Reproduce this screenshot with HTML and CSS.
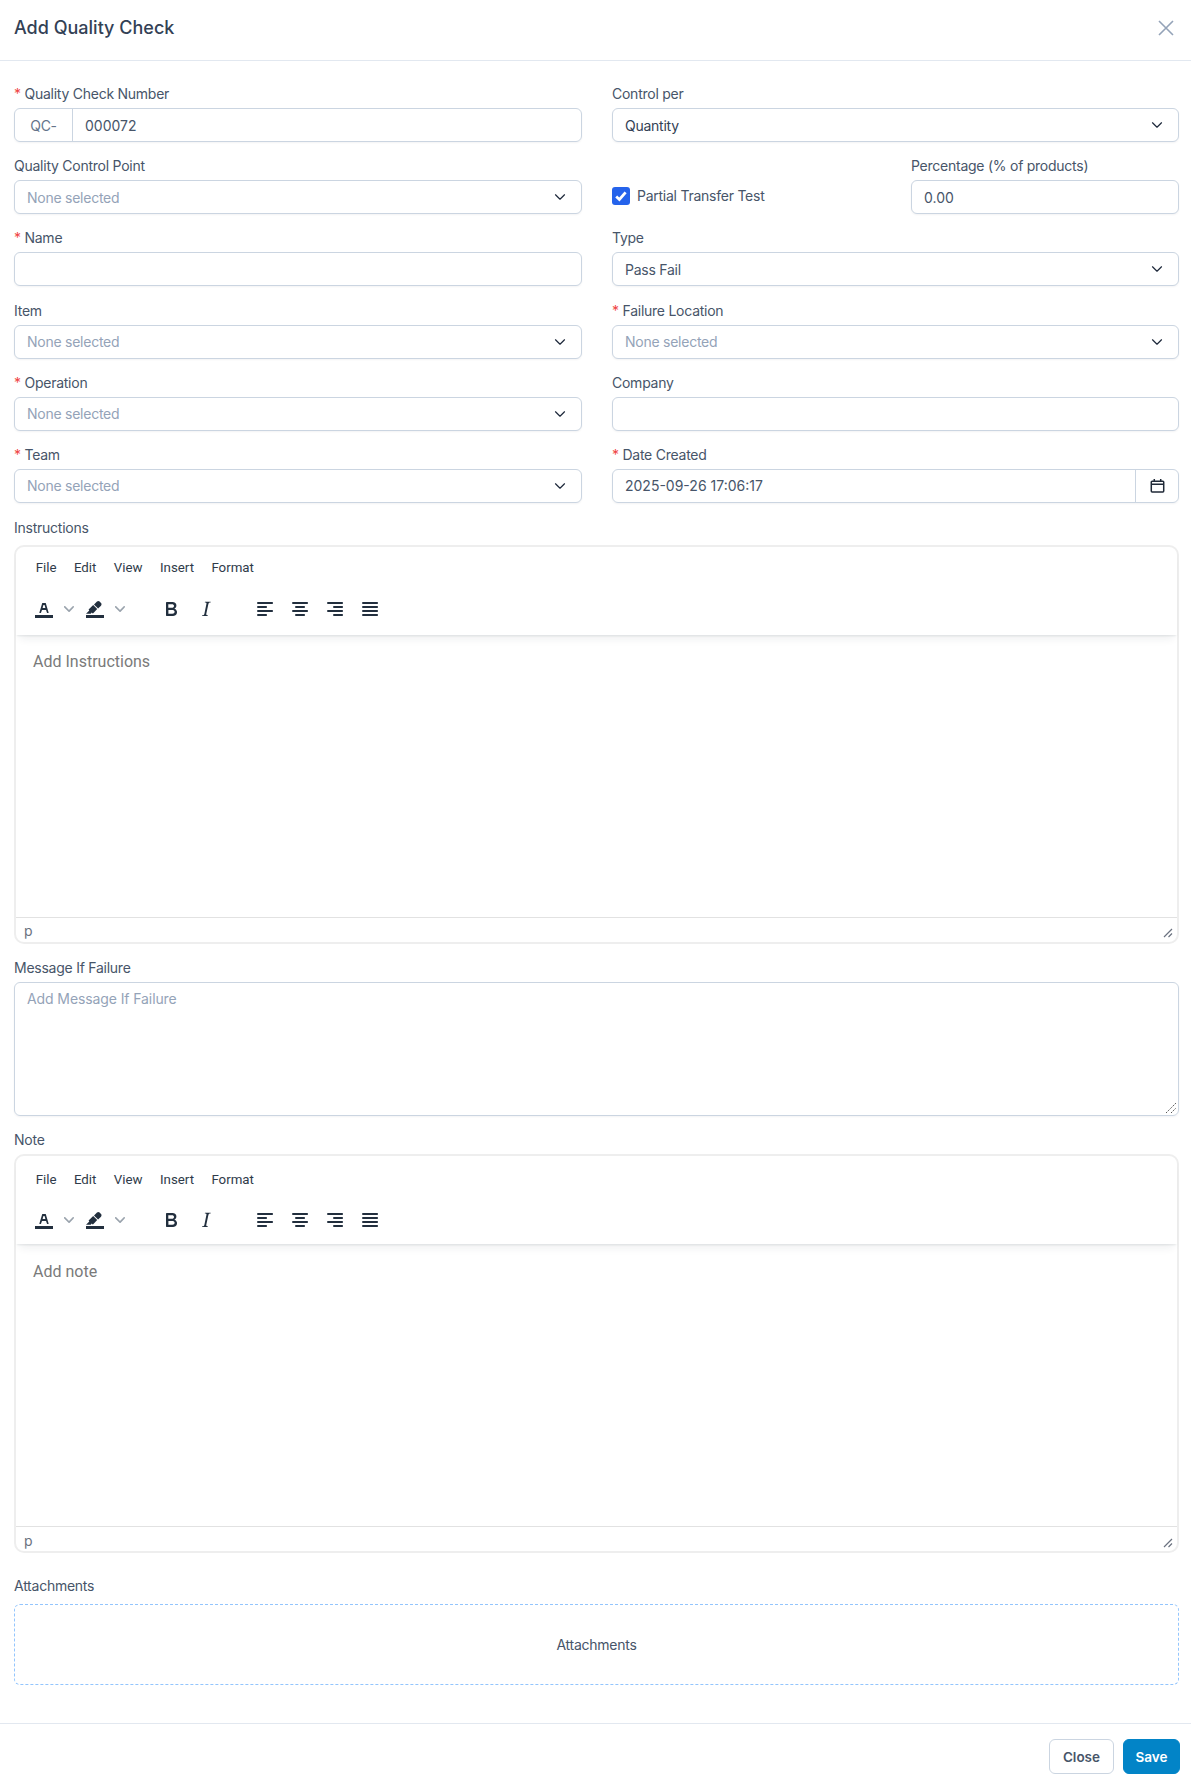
FILE: index.html
```html
<!DOCTYPE html>
<html lang="en">
<head>
    <meta charset="UTF-8">
    <meta name="viewport" content="width=device-width, initial-scale=1.0">
    <title>Add Quality Check</title>
    <link rel="stylesheet" href="styles.css">
</head>
<body>
    <svg class="icon-defs" width="0" height="0">
        <symbol id="i-chevron" viewBox="0 0 20 20"><path fill="none" stroke="currentColor" stroke-width="1.3" stroke-linecap="round" stroke-linejoin="round" d="M5 7.500l5 5 5-5"/></symbol>
        <symbol id="i-caret" viewBox="0 0 10 10"><path d="M8.700 2.200c.3-.3.8-.3 1 0 .4.4.4.9 0 1.200L5.700 7.800c-.3.3-.9.3-1.200 0L.2 3.400a.8.8 0 010-1.200c.3-.3.8-.3 1.100 0L5 6l3.700-3.800z"/></symbol>
        <symbol id="i-text-color" viewBox="0 0 24 24"><path d="M3 18h18v3H3z"/><path d="M8.700 16h-.8a.5.5 0 01-.5-.6l2.700-9c.1-.3.3-.4.5-.4h2.800c.2 0 .4.1.5.4l2.700 9a.5.5 0 01-.5.6h-.8a.5.5 0 01-.4-.4l-.7-2.200c0-.3-.3-.4-.5-.4h-3.400c-.2 0-.4.1-.5.4l-.7 2.200c0 .3-.2.4-.4.4zm2.600-7.600l-.6 2a.5.5 0 00.5.6h1.600a.5.5 0 00.5-.6l-.6-2c0-.3-.3-.4-.5-.4h-.4c-.2 0-.4.1-.5.4z" fill-rule="evenodd"/></symbol>
        <symbol id="i-highlight" viewBox="0 0 24 24"><path d="M3 18h18v3H3z"/><path d="M7.700 16.700H3l3.300-3.300-.7-.8L10.200 8l4 4.100-4 4.200c-.2.2-.6.2-.8 0l-.6-.7-1.100 1.100zm5-7.500L11 7.400l3-2.900a2 2 0 012.600 0L18 6c.7.7.7 2 0 2.700l-2.900 2.900-1.800-1.800-.5-.6"/></symbol>
        <symbol id="i-bold" viewBox="0 0 24 24"><path d="M7.800 19c-.3 0-.5 0-.6-.2l-.2-.5V5.700c0-.2 0-.4.2-.5l.6-.2h5c1.500 0 2.700.3 3.500 1 .7.6 1.100 1.400 1.100 2.500a3 3 0 01-.6 1.900c-.4.6-1 1-1.600 1.200.4.1.9.3 1.300.6s.8.7 1 1.200c.4.4.5 1 .5 1.600 0 1.300-.4 2.300-1.300 3-.8.7-2.100 1-3.800 1H7.800zm5-8.300c.6 0 1.200-.1 1.600-.5.4-.3.6-.7.6-1.300 0-1.100-.8-1.700-2.300-1.700H9.300v3.500h3.400zm.5 6c.7 0 1.300-.1 1.700-.4.4-.4.6-.9.6-1.500s-.2-1-.7-1.400c-.4-.3-1-.4-2-.4H9.400v3.800h4z"/></symbol>
        <symbol id="i-italic" viewBox="0 0 24 24"><path d="M16.700 4.700l-.1.9h-.3c-.6 0-1 0-1.400.3-.3.3-.4.6-.5 1.100l-2.100 9.800v.6c0 .5.4.8 1.400.8h.2l-.2.8H8l.2-.8h.2c1.100 0 1.800-.5 2-1.500l2-9.800.1-.5c0-.6-.4-.8-1.400-.8h-.3l.2-.9h5.800z"/></symbol>
        <symbol id="i-align-left" viewBox="0 0 24 24"><path d="M5 5h14c.6 0 1 .4 1 1s-.4 1-1 1H5a1 1 0 110-2zm0 4h8c.6 0 1 .4 1 1s-.4 1-1 1H5a1 1 0 110-2zm0 8h8c.6 0 1 .4 1 1s-.4 1-1 1H5a1 1 0 010-2zm0-4h14c.6 0 1 .4 1 1s-.4 1-1 1H5a1 1 0 010-2z"/></symbol>
        <symbol id="i-align-center" viewBox="0 0 24 24"><path d="M5 5h14c.6 0 1 .4 1 1s-.4 1-1 1H5a1 1 0 110-2zm3 4h8c.6 0 1 .4 1 1s-.4 1-1 1H8a1 1 0 110-2zm0 8h8c.6 0 1 .4 1 1s-.4 1-1 1H8a1 1 0 010-2zm-3-4h14c.6 0 1 .4 1 1s-.4 1-1 1H5a1 1 0 010-2z"/></symbol>
        <symbol id="i-align-right" viewBox="0 0 24 24"><path d="M5 5h14c.6 0 1 .4 1 1s-.4 1-1 1H5a1 1 0 110-2zm6 4h8c.6 0 1 .4 1 1s-.4 1-1 1h-8a1 1 0 010-2zm0 8h8c.6 0 1 .4 1 1s-.4 1-1 1h-8a1 1 0 010-2zm-6-4h14c.6 0 1 .4 1 1s-.4 1-1 1H5a1 1 0 010-2z"/></symbol>
        <symbol id="i-align-justify" viewBox="0 0 24 24"><path d="M5 5h14c.6 0 1 .4 1 1s-.4 1-1 1H5a1 1 0 110-2zm0 4h14c.6 0 1 .4 1 1s-.4 1-1 1H5a1 1 0 110-2zm0 4h14c.6 0 1 .4 1 1s-.4 1-1 1H5a1 1 0 010-2zm0 4h14c.6 0 1 .4 1 1s-.4 1-1 1H5a1 1 0 010-2z"/></symbol>
    </svg>

    <div class="modal">
        <div class="modal-header">
            <h1>Add Quality Check</h1>
            <svg class="close-x" width="18" height="18" viewBox="0 0 18 18"><path fill="none" stroke="currentColor" stroke-width="1.6" d="M2 2l14 14M16 2L2 16"/></svg>
        </div>

        <div class="modal-body">
            <div class="form-grid">
                <div class="field">
                    <label><span class="req">*</span> Quality Check Number</label>
                    <div class="input-group">
                        <span class="prefix">QC-</span>
                        <span class="control no-border num">000072</span>
                    </div>
                </div>
                <div class="field">
                    <label>Control per</label>
                    <div class="control select value">Quantity <svg class="chevron"><use href="#i-chevron"/></svg></div>
                </div>

                <div class="field">
                    <label>Quality Control Point</label>
                    <div class="control select placeholder">None selected <svg class="chevron"><use href="#i-chevron"/></svg></div>
                </div>
                <div class="split">
                    <label class="check-row">
                        <span class="checkbox"><svg width="18" height="18" viewBox="0 0 18 18"><path fill="none" stroke="#fff" stroke-width="2.800" d="M4.200 9.400l3.200 3 6.200-7"/></svg></span>
                        Partial Transfer Test
                    </label>
                    <div class="field">
                        <label>Percentage (% of products)</label>
                        <div class="control num">0.00</div>
                    </div>
                </div>

                <div class="field">
                    <label><span class="req">*</span> Name</label>
                    <div class="control"></div>
                </div>
                <div class="field">
                    <label>Type</label>
                    <div class="control select">Pass Fail <svg class="chevron"><use href="#i-chevron"/></svg></div>
                </div>

                <div class="field">
                    <label>Item</label>
                    <div class="control select placeholder">None selected <svg class="chevron"><use href="#i-chevron"/></svg></div>
                </div>
                <div class="field">
                    <label><span class="req">*</span> Failure Location</label>
                    <div class="control select placeholder">None selected <svg class="chevron"><use href="#i-chevron"/></svg></div>
                </div>

                <div class="field">
                    <label><span class="req">*</span> Operation</label>
                    <div class="control select placeholder">None selected <svg class="chevron"><use href="#i-chevron"/></svg></div>
                </div>
                <div class="field">
                    <label>Company</label>
                    <div class="control"></div>
                </div>

                <div class="field">
                    <label><span class="req">*</span> Team</label>
                    <div class="control select placeholder">None selected <svg class="chevron"><use href="#i-chevron"/></svg></div>
                </div>
                <div class="field">
                    <label><span class="req">*</span> Date Created</label>
                    <div class="input-group">
                        <span class="control no-border num">2025-09-26 17:06:17</span>
                        <span class="calendar">
                            <svg width="15" height="15" viewBox="0 0 14 14"><path fill="none" stroke="#1f2937" stroke-width="1.400" d="M2 3h10a.8.8 0 01.8.8v8.400a.8.8 0 01-.8.8H2a.8.8 0 01-.8-.8V3.800A.8.8 0 012 3zM1.500 5.800h11M4 1v2.500M10 1v2.500"/></svg>
                        </span>
                    </div>
                </div>
            </div>

            <div class="block block-first">
                <label>Instructions</label>
                <div class="editor">
                    <div class="editor-head">
                        <div class="menubar"><span>File</span><span>Edit</span><span>View</span><span>Insert</span><span>Format</span></div>
                        <div class="toolbar">
                            <svg class="tool with-caret"><use href="#i-text-color"/></svg>
                            <svg class="caret"><use href="#i-caret"/></svg>
                            <svg class="tool with-caret"><use href="#i-highlight"/></svg>
                            <svg class="caret"><use href="#i-caret"/></svg>
                            <span class="tool-sep"></span>
                            <svg class="tool"><use href="#i-bold"/></svg>
                            <svg class="tool"><use href="#i-italic"/></svg>
                            <span class="tool-sep"></span>
                            <svg class="tool"><use href="#i-align-left"/></svg>
                            <svg class="tool"><use href="#i-align-center"/></svg>
                            <svg class="tool"><use href="#i-align-right"/></svg>
                            <svg class="tool"><use href="#i-align-justify"/></svg>
                        </div>
                    </div>
                    <div class="editor-body">Add Instructions</div>
                    <div class="statusbar">p
                        <svg class="grip" width="10" height="10" viewBox="0 0 10 10"><path fill="none" stroke="#6b7280" stroke-width="1.200" d="M1 9l8-8M5.500 9L9 5.500"/></svg>
                    </div>
                </div>
            </div>

            <div class="block">
                <label>Message If Failure</label>
                <div class="textarea">Add Message If Failure
                    <svg class="grip-area" width="12" height="12" viewBox="0 0 12 12"><path fill="none" stroke="#555" stroke-width="1" stroke-dasharray="1.500 1" d="M1 11L11 1M6 11l5-5"/></svg>
                </div>
            </div>

            <div class="block block-note">
                <label>Note</label>
                <div class="editor">
                    <div class="editor-head">
                        <div class="menubar"><span>File</span><span>Edit</span><span>View</span><span>Insert</span><span>Format</span></div>
                        <div class="toolbar">
                            <svg class="tool with-caret"><use href="#i-text-color"/></svg>
                            <svg class="caret"><use href="#i-caret"/></svg>
                            <svg class="tool with-caret"><use href="#i-highlight"/></svg>
                            <svg class="caret"><use href="#i-caret"/></svg>
                            <span class="tool-sep"></span>
                            <svg class="tool"><use href="#i-bold"/></svg>
                            <svg class="tool"><use href="#i-italic"/></svg>
                            <span class="tool-sep"></span>
                            <svg class="tool"><use href="#i-align-left"/></svg>
                            <svg class="tool"><use href="#i-align-center"/></svg>
                            <svg class="tool"><use href="#i-align-right"/></svg>
                            <svg class="tool"><use href="#i-align-justify"/></svg>
                        </div>
                    </div>
                    <div class="editor-body">Add note</div>
                    <div class="statusbar">p
                        <svg class="grip" width="10" height="10" viewBox="0 0 10 10"><path fill="none" stroke="#6b7280" stroke-width="1.200" d="M1 9l8-8M5.500 9L9 5.500"/></svg>
                    </div>
                </div>
            </div>

            <div class="block attachments">
                <label>Attachments</label>
                <div class="dropzone">Attachments</div>
            </div>
        </div>

        <div class="modal-footer">
            <button class="btn btn-default">Close</button>
            <button class="btn btn-primary">Save</button>
        </div>
    </div>
</body>
</html>
```

FILE: styles.css
```css
* {
    box-sizing: border-box;
}
body {
    margin: 0;
    background: #fff;
    font-family: Inter, 'Noto Sans', sans-serif;
    font-size: 14px;
    letter-spacing: -0.25px;
    color: #475569;
}
.icon-defs {
    position: absolute;
}
.modal-header {
    height: 61px;
    padding: 0 16px 0 14px;
    border-bottom: 1px solid #e2e8f0;
    display: flex;
    align-items: center;
    justify-content: space-between;
}
.modal-header h1 {
    margin: 0 0 6px;
    font-size: 18px;
    font-weight: 500;
    letter-spacing: 0;
    color: #334155;
}
.close-x {
    color: #94a3b8;
    margin-bottom: 4px;
}
.modal-body {
    padding: 23px 12px 0 14px;
}
.form-grid {
    display: grid;
    grid-template-columns: 568px 567px;
    column-gap: 30px;
    row-gap: 14.2px;
}
label {
    display: block;
    font-weight: 430;
    color: #475569;
    line-height: 20px;
    font-size: 14px;
}
.req {
    color: #ef4444;
}
.field label {
    margin-bottom: 4px;
}
.control {
    height: 34px;
    padding: 0 12px;
    display: flex;
    align-items: center;
    justify-content: space-between;
    border: 1px solid #cbd5e1;
    border-radius: 6px;
    background: #fff;
    color: #475569;
    box-shadow: 0 1px 2px rgba(15, 23, 42, 0.05);
}
.num {
    letter-spacing: 0;
}
.placeholder {
    color: #94a3b8;
}
.value {
    color: #334155;
}
.chevron {
    width: 18px;
    height: 18px;
    color: #1e293b;
}
.input-group {
    display: flex;
    height: 34px;
    border: 1px solid #cbd5e1;
    border-radius: 6px;
    box-shadow: 0 1px 2px rgba(15, 23, 42, 0.05);
}
.prefix {
    width: 58px;
    display: flex;
    align-items: center;
    justify-content: center;
    border-right: 1px solid #cbd5e1;
    color: #64748b;
}
.control.no-border {
    flex: 1;
    height: 32px;
    border: 0;
    background: transparent;
    box-shadow: none;
}
.calendar {
    width: 43px;
    display: flex;
    align-items: center;
    justify-content: center;
    border-left: 1px solid #cbd5e1;
}
.split {
    display: grid;
    grid-template-columns: 299px 268px;
}
.check-row {
    display: flex;
    align-items: center;
    gap: 7px;
    margin-top: 24px;
    height: 34px;
    padding-bottom: 2px;
}
.checkbox {
    width: 18px;
    height: 18px;
    border-radius: 3px;
    background: #2563eb;
    display: flex;
    align-items: center;
    justify-content: center;
}
.block {
    margin-top: 14px;
}
.block label {
    margin-bottom: 4px;
}
.block-first {
    margin-top: 15.5px;
}
.block-first label {
    margin-bottom: 6.5px;
}
.block-note {
    margin-top: 14.5px;
}
.editor {
    height: 399px;
    border: 2px solid #eeeeee;
    border-radius: 10px;
    display: flex;
    flex-direction: column;
    background: #fff;
    letter-spacing: 0;
}
.editor-head {
    height: 88px;
    padding: 3px 0 0 11px;
    box-shadow: 0 2px 2px -1px rgba(34, 47, 62, 0.1), 0 8px 8px -4px rgba(34, 47, 62, 0.07);
}
.block-note .editor-head {
    padding-top: 5px;
}
.menubar {
    display: flex;
    height: 36px;
    align-items: center;
    font-family: Roboto, 'Open Sans', sans-serif;
    font-size: 13.3px;
    color: #2f3b4a;
}
.menubar span {
    padding: 0 8.7px;
}
.toolbar {
    display: flex;
    align-items: center;
    height: 40px;
    margin-top: 3px;
    margin-left: -7px;
    padding-left: 6px;
    color: #222f3e;
}
.tool {
    width: 24px;
    height: 24px;
    margin: 0 5px 0 6px;
    fill: #222f3e;
}
.tool.with-caret {
    margin-right: 8px;
}
.caret {
    width: 10px;
    height: 10px;
    margin-right: 3px;
    fill: #9aa3ad;
}
.tool-sep {
    width: 24.5px;
}
.editor-body {
    flex: 1;
    padding: 17px 17px;
    font-family: Roboto, 'Open Sans', sans-serif;
    font-size: 16px;
    color: #7a7a7a;
}
.block-note .editor-body {
    padding-top: 18px;
}
.statusbar {
    height: 25px;
    padding: 2px 4px 0 8px;
    border-top: 1px solid #e2e2e2;
    display: flex;
    align-items: center;
    justify-content: space-between;
    font-size: 14px;
    color: #6b7280;
}
.grip {
    margin-top: 5px;
}
.textarea {
    position: relative;
    height: 134px;
    padding: 7px 12px;
    border: 1px solid #cbd5e1;
    border-radius: 6px;
    color: #94a3b8;
    letter-spacing: -0.1px;
    box-shadow: 0 1px 2px rgba(15, 23, 42, 0.05);
}
.grip-area {
    position: absolute;
    right: 1px;
    bottom: 1px;
}
.attachments {
    margin-top: 23px;
}
.attachments label {
    margin-bottom: 8px;
}
.dropzone {
    height: 81px;
    display: flex;
    align-items: center;
    justify-content: center;
    border: 1px dashed #93c5fd;
    border-radius: 6px;
    color: #475569;
}
.modal-footer {
    margin-top: 38px;
    padding: 15px 11px 0 0;
    border-top: 1px solid #e2e8f0;
    display: flex;
    justify-content: flex-end;
    gap: 9px;
}
.btn {
    height: 35px;
    padding: 0 13px;
    border-radius: 6px;
    font-family: inherit;
    font-size: 13.5px;
    font-weight: 600;
}
.btn-default {
    background: #fff;
    border: 1px solid #cbd5e1;
    color: #475569;
}
.btn-primary {
    padding: 0 11.5px;
    background: #0284c7;
    border: 1px solid #0284c7;
    color: #fff;
}
```
